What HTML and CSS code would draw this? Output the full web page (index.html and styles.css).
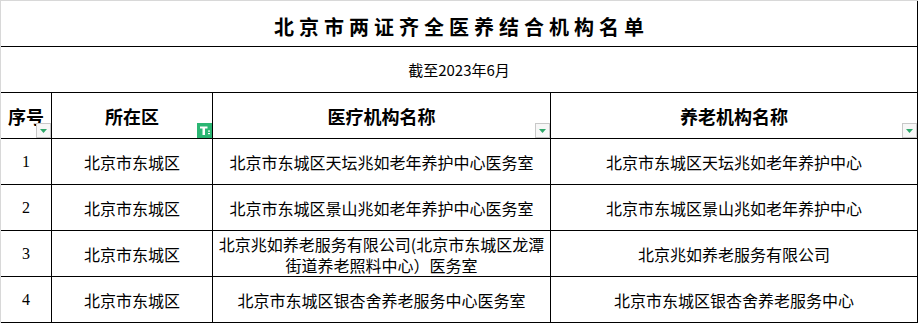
FILE: index.html
```html
<!DOCTYPE html>
<html lang="zh-CN">
<head>
<meta charset="utf-8">
<title>北京市两证齐全医养结合机构名单</title>
<link rel="stylesheet" href="styles.css">
</head>
<body>
<div class="page">
  <div class="sheet">
    <div class="cell title">北京市两证齐全医养结合机构名单</div>
    <div class="cell subtitle">截至2023年6月</div>

    <div class="cell head">序号<span class="dd"><svg viewBox="0 0 13 13" width="13" height="13"><polygon points="3,5 10,5 6.5,9" fill="#2fa86a"/></svg></span></div>
    <div class="cell head">所在区<span class="dd active"><svg viewBox="0 0 15 15" width="15" height="15"><path d="M3 3.5H10.5V5.5H8V12H5.5V5.5H3Z" fill="#fff"/><rect x="11" y="7.5" width="2" height="1.2" fill="#fff"/><rect x="11" y="10" width="2" height="1.2" fill="#fff"/></svg></span></div>
    <div class="cell head">医疗机构名称<span class="dd"><svg viewBox="0 0 13 13" width="13" height="13"><polygon points="3,5 10,5 6.5,9" fill="#2fa86a"/></svg></span></div>
    <div class="cell head">养老机构名称<span class="dd"><svg viewBox="0 0 13 13" width="13" height="13"><polygon points="3,5 10,5 6.5,9" fill="#2fa86a"/></svg></span></div>

    <div class="cell num">1</div>
    <div class="cell">北京市东城区</div>
    <div class="cell">北京市东城区天坛兆如老年养护中心医务室</div>
    <div class="cell">北京市东城区天坛兆如老年养护中心</div>

    <div class="cell num">2</div>
    <div class="cell">北京市东城区</div>
    <div class="cell">北京市东城区景山兆如老年养护中心医务室</div>
    <div class="cell">北京市东城区景山兆如老年养护中心</div>

    <div class="cell num">3</div>
    <div class="cell">北京市东城区</div>
    <div class="cell wrap"><span class="line">北京兆如养老服务有限公司(北京市东城区龙潭</span><span class="line">街道养老照料中心）医务室</span></div>
    <div class="cell">北京兆如养老服务有限公司</div>

    <div class="cell num">4</div>
    <div class="cell">北京市东城区</div>
    <div class="cell">北京市东城区银杏舍养老服务中心医务室</div>
    <div class="cell">北京市东城区银杏舍养老服务中心</div>
  </div>
</div>
</body>
</html>
```

FILE: styles.css
```css
html, body {
  margin: 0;
  padding: 0;
  background: #fff;
}

body {
  font-family: "Noto Sans CJK SC", "Noto Sans", sans-serif;
  color: #000;
  width: 919px;
  height: 324px;
  overflow: hidden;
}

.page {
  border-top: 1px solid #d8d8d8;
  border-left: 1px solid #d8d8d8;
  width: 917px;
}

.sheet {
  display: grid;
  grid-template-columns: 50px 160px 337px 366px;
  grid-auto-rows: 45px;
  gap: 1px;
  background: #000;
  padding: 0 1px 1px 0;
}

.cell {
  background: #fff;
  display: flex;
  align-items: center;
  justify-content: center;
  text-align: center;
  font-size: 16px;
  line-height: 20px;
  position: relative;
  white-space: nowrap;
}

.title {
  grid-column: 1 / -1;
  font-size: 20px;
  font-weight: 700;
  letter-spacing: 5px;
  padding: 6px 0 0 5px;
  box-sizing: border-box;
}

.subtitle {
  grid-column: 1 / -1;
  font-size: 15px;
  padding-top: 1px;
  box-sizing: border-box;
}

.head {
  font-size: 18px;
  font-weight: 700;
}

.num {
  font-family: "Liberation Serif", "Noto Sans CJK SC", serif;
  font-size: 16px;
}

.wrap {
  flex-direction: column;
  justify-content: flex-start;
  padding-top: 3px;
  box-sizing: border-box;
  overflow: hidden;
}

.line {
  display: block;
  line-height: 21px;
  height: 21px;
}

.dd {
  position: absolute;
  right: 0;
  bottom: 0;
  width: 13px;
  height: 13px;
  border: 1px solid #c8c8c8;
  background: #f7f7f7;
  display: flex;
}

.dd.active {
  width: 15px;
  height: 15px;
  border: none;
  background: #2bb673;
}
```
